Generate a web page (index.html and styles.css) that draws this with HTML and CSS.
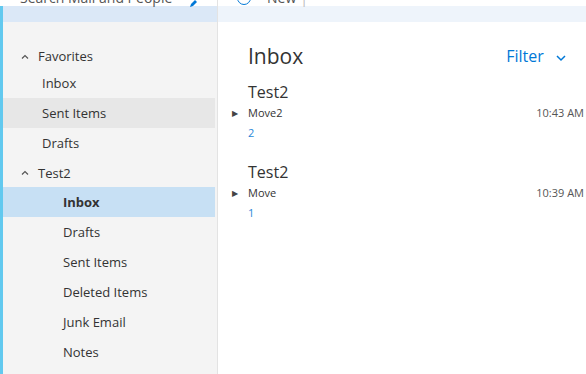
FILE: index.html
```html
<!DOCTYPE html>
<html lang="en">
<head>
    <meta charset="UTF-8">
    <title>Mail</title>
    <link rel="stylesheet" href="styles.css">
</head>
<body>
  <div class="shell">
    <div class="rail"></div>

    <div class="left">
      <div class="search">
        <span class="search-text">Search Mail and People</span>
        <svg class="pencil" width="8" height="8" viewBox="0 0 8 8"><path d="M1 7 L2 4 L6 0 L8 2 L4 6 Z" fill="#0078d7"/></svg>
      </div>
      <div class="nav">
        <div class="group first"><svg class="chev" width="8" height="5" viewBox="0 0 8 5"><path d="M1 4.5 L4 1.5 L7 4.5" fill="none" stroke="#555" stroke-width="1.2"/></svg>Favorites</div>
        <div class="item">Inbox</div>
        <div class="item hover">Sent Items</div>
        <div class="item">Drafts</div>
        <div class="group"><svg class="chev" width="8" height="5" viewBox="0 0 8 5"><path d="M1 4.5 L4 1.5 L7 4.5" fill="none" stroke="#555" stroke-width="1.2"/></svg>Test2</div>
        <div class="item sub active">Inbox</div>
        <div class="item sub">Drafts</div>
        <div class="item sub">Sent Items</div>
        <div class="item sub">Deleted Items</div>
        <div class="item sub">Junk Email</div>
        <div class="item sub">Notes</div>
      </div>
    </div>

    <div class="right">
      <div class="cmdbar">
        <span class="new"><span class="plus"></span>New<span class="sep">|</span></span>
      </div>
      <div class="list">
        <div class="list-head">
          <h1>Inbox</h1>
          <span class="filter">Filter <svg width="10" height="7" viewBox="0 0 10 7"><path d="M1 1 L5 5 L9 1" fill="none" stroke="#0078d7" stroke-width="1.5"/></svg></span>
        </div>

        <div class="msg">
          <div class="from">Test2</div>
          <div class="line"><span class="tri">&#9654;</span><span class="subject">Move2</span><span class="time">10:43 AM</span></div>
          <div class="preview">2</div>
        </div>

        <div class="msg">
          <div class="from">Test2</div>
          <div class="line"><span class="tri">&#9654;</span><span class="subject">Move</span><span class="time">10:39 AM</span></div>
          <div class="preview">1</div>
        </div>
      </div>
    </div>
  </div>
</body>
</html>
```

FILE: styles.css
```css
html, body {
    margin: 0;
    height: 100%;
    overflow: hidden;
    background: #fff;
    font-family: "Open Sans", "Noto Sans", sans-serif;
    color: #333;
}

.shell {
    display: flex;
    height: 374px;
}

.rail {
    width: 3px;
    background: linear-gradient(#fff 0 6px, #62c9ef 6px);
}

.left {
    width: 214px;
    display: flex;
    flex-direction: column;
    border-right: 1px solid #e3e3e3;
}

.search {
    height: 22px;
    overflow: hidden;
    display: flex;
    justify-content: space-between;
    background: linear-gradient(#fff 0 6px, #dbe8f7 6px);
}

.search-text {
    margin: -12px 0 0 17px;
    font-size: 14px;
    line-height: 20px;
    color: #555;
}

.pencil {
    margin-right: 20px;
}

.nav {
    flex: 1;
    background: #f4f4f4;
    padding-top: 19px;
    font-size: 13px;
}

.group {
    display: flex;
    align-items: center;
    height: 29px;
    padding-left: 18px;
}

.group.first {
    height: 27px;
    padding-top: 3px;
    box-sizing: border-box;
}

.chev {
    margin-right: 9px;
}

.item {
    height: 30px;
    line-height: 30px;
    padding-left: 39px;
    margin-right: 2px;
}

.item.sub { padding-left: 60px; }
.hover { background: #e7e7e7; }
.active { background: #c7e0f4; font-weight: bold; }

.right {
    flex: 1;
    display: flex;
    flex-direction: column;
}

.cmdbar {
    height: 22px;
    overflow: hidden;
    background: linear-gradient(#fff 0 6px, #eef4fb 6px);
}

.new {
    display: flex;
    align-items: center;
    margin: -12px 0 0 19px;
    font-size: 14px;
    line-height: 20px;
    color: #555;
}

.plus {
    width: 12px;
    height: 12px;
    border: 1.5px solid #0078d7;
    border-radius: 50%;
    margin-right: 16px;
}

.sep { margin-left: 4px; color: #bbb; }

.list {
    padding: 0 2px 0 14px;
}

.list-head {
    display: flex;
    justify-content: space-between;
    align-items: center;
    padding: 0 18px 0 16px;
    margin-top: 19px;
}

h1 {
    margin: 0;
    font-size: 21px;
    font-weight: normal;
    line-height: 30px;
}

.filter {
    color: #0078d7;
    font-size: 16px;
}

.filter svg { margin-left: 8px; }

.msg {
    margin-top: 9px;
    height: 71px;
}

.from {
    padding-left: 16px;
    font-size: 16px;
    line-height: 24px;
}

.line {
    display: flex;
    align-items: center;
    font-size: 11px;
    line-height: 18px;
}

.tri {
    width: 16px;
    color: #444;
    font-size: 8px;
}

.subject { flex: 1; }
.time { color: #555; }

.preview {
    padding-left: 16px;
    font-size: 11px;
    line-height: 22px;
    color: #2b88d8;
}
```
